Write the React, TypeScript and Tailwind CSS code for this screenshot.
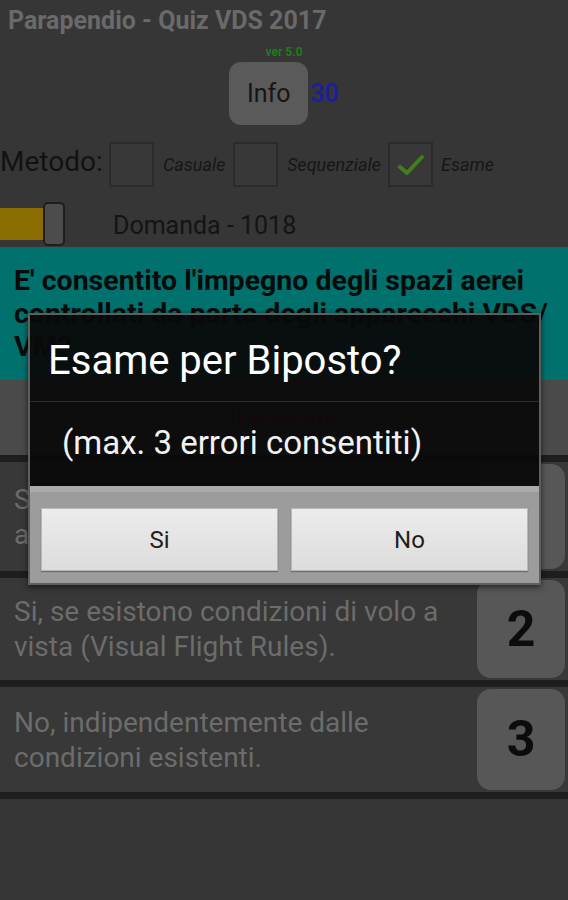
const answers = [
  { n: "1", h: "h-[109px]", lines: ["Si, previo contatto radio con l'ente", "addetto al controllo del traffico."] },
  { n: "2", h: "h-[102px]", lines: ["Si, se esistono condizioni di volo a", "vista (Visual Flight Rules)."] },
  { n: "3", h: "h-[105px]", lines: ["No, indipendentemente dalle", "condizioni esistenti."] },
];

function Box({ checked }: { checked?: boolean }) {
  return (
    <div className="flex h-[45px] w-[45px] items-center justify-center border-2 border-[#2b2b2b] bg-[#383838]">
      {checked && (
        <svg width="34" height="30" viewBox="0 0 34 30">
          <path d="M6 17 L13 23 L28 7" fill="none" stroke="#437e1c" strokeWidth="4" strokeLinecap="round" strokeLinejoin="round" />
        </svg>
      )}
    </div>
  );
}

export default function App() {
  return (
    <div className="relative h-[900px] w-[568px] overflow-hidden bg-[#363636] font-['Roboto',sans-serif]">
      <div className="flex h-[42px] items-center px-2 text-[25px] font-bold text-[#6a6a6a]">Parapendio - Quiz VDS 2017</div>
      <div className="mt-[3px] flex h-[14px] items-center justify-center text-[12px] font-bold leading-none text-[#1f7a1f]">ver 5.0</div>

      <div className="mt-[3px] flex h-[63px] items-center justify-center">
        <div className="flex h-[63px] w-[79px] items-center justify-center rounded-[12px] bg-[#5a5a5a] text-[25px] text-[#161616]">Info</div>
        <span className="ml-[2px] text-[25px] font-medium text-[#1c1ca6]">30</span>
      </div>

      <div className="mt-[17px] flex h-[45px] items-center">
        <span className="mb-[6px] w-[109px] text-[28px] text-[#121212]">Metodo:</span>
        <Box />
        <span className="w-[79px] pl-[9px] text-[18px] italic text-[#161616]">Casuale</span>
        <Box />
        <span className="w-[110px] pl-[9px] text-[18px] italic text-[#161616]">Sequenziale</span>
        <Box checked />
        <span className="pl-[8px] text-[18px] italic text-[#161616]">Esame</span>
      </div>

      <div className="mt-[15px] flex h-[44px] items-center">
        <div className="h-[32px] w-[46px] bg-[#8a6d00]" />
        <div className="-ml-[3px] h-[44px] w-[22px] rounded-[5px] border-2 border-[#1e1e1e] bg-[#4c4c4c]" />
        <span className="ml-[48px] mt-[3px] text-[25px] text-[#141414]">Domanda - 1018</span>
      </div>

      <div className="mt-[1px] h-[133px] bg-[#00716d] pl-[14px] pt-[17px] text-[28.5px] font-bold leading-[33px] text-[#0a0a0a]">
        <div className="whitespace-nowrap">E' consentito l'impegno degli spazi aerei</div>
        <div className="whitespace-nowrap">controllati da parte degli apparecchi VDS/</div>
        <div>VM?</div>
      </div>

      <div className="flex h-[75px] items-center justify-center bg-[#4a4a4a] text-[24px] font-bold text-[#b01616]">Il Assente</div>

      {answers.map((a) => (
        <div key={a.n}>
          <div className="h-[7px] bg-[#1e1e1e]" />
          <div className={`flex ${a.h} items-stretch bg-[#383838] py-[2px] pr-[3px]`}>
            <div className="flex flex-1 flex-col justify-center pl-[14px] text-[28px] leading-[35px] text-[#6c6c6c]">
              {a.lines.map((l) => (
                <div key={l} className="whitespace-nowrap">{l}</div>
              ))}
            </div>
            <div className="flex w-[88px] items-center justify-center rounded-[14px] bg-[#575757] text-[50px] font-bold text-[#0c0c0c]">{a.n}</div>
          </div>
        </div>
      ))}
      <div className="h-[7px] bg-[#1e1e1e]" />

      <div className="absolute left-[28px] top-[313px] w-[513px] border-2 border-[#5e5e5e] shadow-[0_2px_6px_rgba(0,0,0,0.6)]">
        <div className="flex h-[86px] items-center bg-[#0a0a0a]/95 pl-[18px] pt-[5px] text-[40px] text-white">Esame per Biposto?</div>
        <div className="h-px bg-[#2c2c2c]" />
        <div className="flex h-[84px] items-center bg-[#0a0a0a]/95 pb-[3px] pl-[32px] text-[33px] text-[#f2f2f2]">(max. 3 errori consentiti)</div>
        <div className="flex h-[97px] gap-[13px] border-t-[6px] border-[#ababab] bg-[#9c9c9c] px-[11px] pt-[16px]">
          <div className="flex h-[63px] w-[237px] items-center justify-center border border-[#b8b8b8] bg-[linear-gradient(#ececec,#dcdcdc)] text-[24px] text-[#1e1e1e] shadow-[0_1px_1px_rgba(0,0,0,0.3)]">Si</div>
          <div className="flex h-[63px] w-[237px] items-center justify-center border border-[#b8b8b8] bg-[linear-gradient(#ececec,#dcdcdc)] text-[24px] text-[#1e1e1e] shadow-[0_1px_1px_rgba(0,0,0,0.3)]">No</div>
        </div>
      </div>
    </div>
  );
}
